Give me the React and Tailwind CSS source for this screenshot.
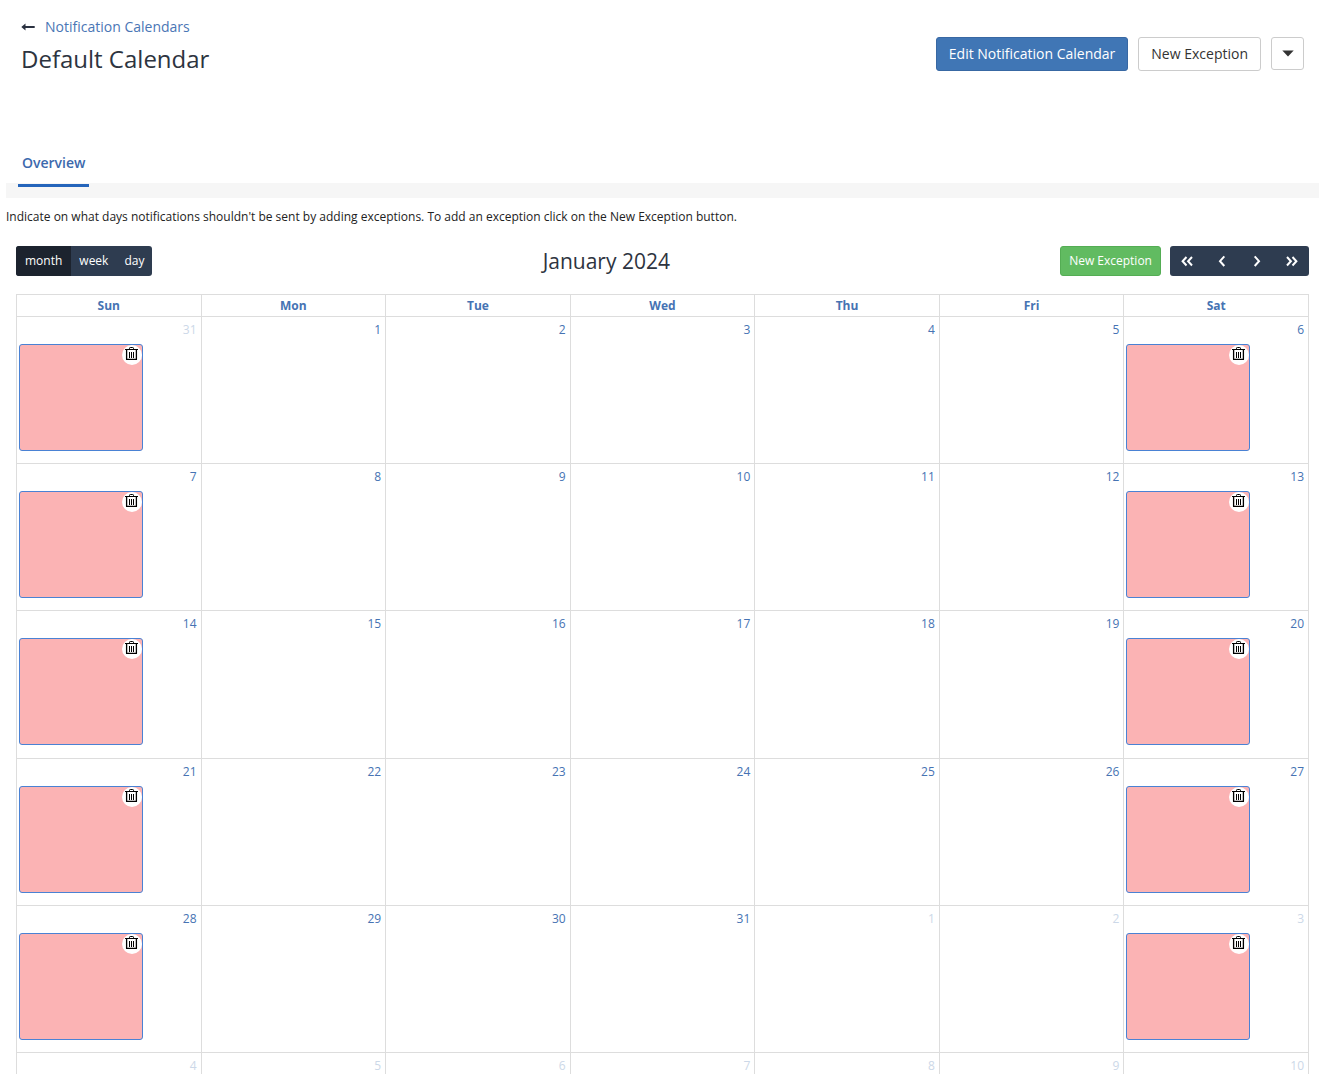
const WEEKDAYS = ["Sun", "Mon", "Tue", "Wed", "Thu", "Fri", "Sat"];

// Negative numbers are days that belong to the neighbouring months.
const WEEKS = [
  [-31, 1, 2, 3, 4, 5, 6],
  [7, 8, 9, 10, 11, 12, 13],
  [14, 15, 16, 17, 18, 19, 20],
  [21, 22, 23, 24, 25, 26, 27],
  [28, 29, 30, 31, -1, -2, -3],
  [-4, -5, -6, -7, -8, -9, -10],
];

function TrashIcon() {
  return (
    <svg width="14" height="14" viewBox="0 0 14 14" fill="none" stroke="#000" aria-hidden="true">
      <path d="M0 2.5H13" />
      <path d="M4.5 2.5V1.3Q4.5 0.5 5.3 0.5H7.7Q8.5 0.5 8.5 1.3V2.5" />
      <path d="M1.6 2.5V12.4H11.4V2.5" strokeWidth="1.3" strokeLinejoin="round" />
      <path d="M4.5 5V11M6.5 5V11M8.5 5V11" />
    </svg>
  );
}

function Chevron({ double, flip }) {
  return (
    <svg
      width="12"
      height="12"
      viewBox="0 0 12 12"
      fill="none"
      stroke="#fff"
      strokeWidth="2"
      className={flip ? "-scale-x-100" : ""}
      aria-hidden="true"
    >
      {double ? <path d="M5.5 2L1.6 6.2L5.5 10.5M11 2L7.1 6.2L11 10.5" /> : <path d="M8.3 1.4L4 6.2L8.3 11" />}
    </svg>
  );
}

function Exception() {
  return (
    <div className="flex h-[107px] w-[124px] items-start justify-end rounded-[3px] border border-[#4a82d4] bg-[#fbb3b4]">
      <button type="button" aria-label="Delete exception" className="flex size-5 items-start justify-center rounded-full bg-white pt-0.5">
        <TrashIcon />
      </button>
    </div>
  );
}

export default function App() {
  return (
    <div className="h-screen overflow-hidden bg-white pr-[18px] pl-1.5 font-['Open_Sans','Noto_Sans',sans-serif] text-[#2d3440]">
      <header className="flex h-[145px] items-start justify-between pr-[15px] pl-[15px]">
        <div className="pt-4">
          <a href="#calendars" className="flex items-center gap-[10px] text-sm leading-[22px] text-[#4a76b5]">
            <svg width="14" height="8" viewBox="0 0 14 8" aria-hidden="true">
              <path d="M4.5 0.5L0.3 4L4.5 7.5V5.1H13.7V2.9H4.5Z" fill="#2a3140" />
            </svg>
            Notification Calendars
          </a>
          <h1 className="text-2xl leading-[42px]">Default Calendar</h1>
        </div>
        <div className="flex items-start gap-[10px] pt-[37px] text-sm text-[#333]">
          <button type="button" className="h-[34px] rounded-[3px] border border-[#3868a3] bg-[#4076b5] px-3 text-white">
            Edit Notification Calendar
          </button>
          <button type="button" className="h-[34px] rounded-[3px] border border-[#ccc] px-3">
            New Exception
          </button>
          <button type="button" aria-label="More actions" className="flex h-[33px] w-[33px] items-center justify-center rounded-[3px] border border-[#ccc]">
            <svg width="12" height="8" viewBox="0 0 12 8" aria-hidden="true">
              <path d="M0.3 0.5H11.7L6 6.5Z" fill="#333" />
            </svg>
          </button>
        </div>
      </header>

      <nav className="flex h-[53px] border-b-[15px] border-[#f6f6f6] pl-3">
        <a href="#overview" className="h-[42px] border-b-[3px] border-[#2565bb] px-1 pt-2 text-sm leading-5 font-semibold text-[#3c69ad]">
          Overview
        </a>
      </nav>

      <p className="pt-[10px] text-xs leading-[18px] text-[#222]">
        Indicate on what days notifications shouldn't be sent by adding exceptions. To add an exception click on the New Exception button.
      </p>

      <main className="px-[10px] pt-5">
        <div className="flex items-center justify-between pb-[18px]">
          <div className="flex h-[30px] overflow-hidden rounded-[3px] bg-[#2e3c50] text-xs text-white">
            <button type="button" className="bg-[#1c232e] px-[9px]">month</button>
            <button type="button" className="px-2">week</button>
            <button type="button" className="px-2">day</button>
          </div>
          <h2 className="text-[21px] leading-[30px]">January 2024</h2>
          <div className="flex gap-[9px]">
            <button type="button" className="h-[30px] rounded-[3px] border border-[#54ad54] bg-[#61bb61] px-2 text-xs text-white">
              New Exception
            </button>
            <div className="grid h-[30px] w-[139px] grid-cols-4 rounded-[3px] bg-[#2e3c50]">
              <button type="button" aria-label="Previous year" className="flex items-center justify-center"><Chevron double /></button>
              <button type="button" aria-label="Previous month" className="flex items-center justify-center"><Chevron /></button>
              <button type="button" aria-label="Next month" className="flex items-center justify-center"><Chevron flip /></button>
              <button type="button" aria-label="Next year" className="flex items-center justify-center"><Chevron double flip /></button>
            </div>
          </div>
        </div>

        <table className="w-full table-fixed border-collapse text-xs text-[#4673b3]">
          <thead>
            <tr>
              {WEEKDAYS.map((day) => (
                <th key={day} className="h-[22px] border border-[#ddd] p-0 leading-5 font-bold">{day}</th>
              ))}
            </tr>
          </thead>
          <tbody>
            {WEEKS.map((week, row) => (
              <tr key={row} className={row === 2 ? "h-[148px]" : "h-[147px]"}>
                {week.map((day, col) => (
                  <td key={col} className="border border-[#ddd] p-0 align-top">
                    <div className={day < 0 ? "pt-1 pr-1 pb-1 text-right leading-[18px] text-[#ccd8e8]" : "pt-1 pr-1 pb-1 text-right leading-[18px]"}>
                      {Math.abs(day)}
                    </div>
                    {(col === 0 || col === 6) && row < 5 && (
                      <div className="px-0.5 pt-px"><Exception /></div>
                    )}
                  </td>
                ))}
              </tr>
            ))}
          </tbody>
        </table>
      </main>
    </div>
  );
}
